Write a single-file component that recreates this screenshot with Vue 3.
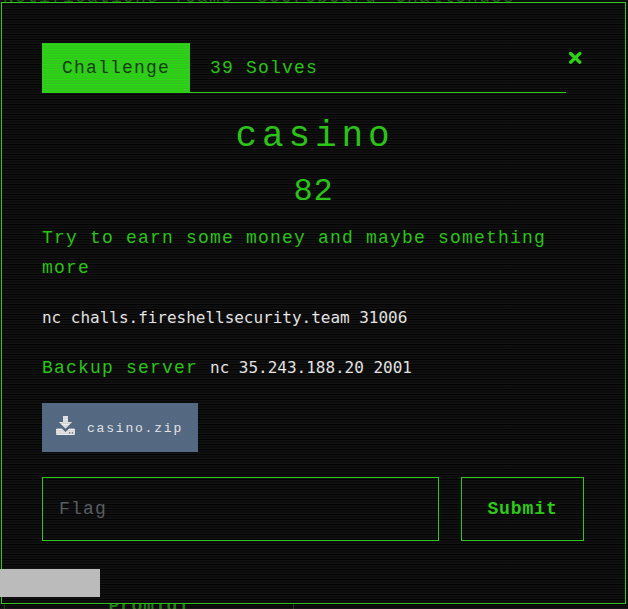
<script setup>
const navItems = ['Notifications', 'Teams', 'Scoreboard', 'Challenges']
</script>

<template>
  <div class="page">
    <nav class="nav">
      <span v-for="item in navItems" :key="item">{{ item }}</span>
    </nav>
    <section class="modal">
      <header class="head">
        <div class="tabs">
          <span class="tab active">Challenge</span>
          <span class="tab">39 Solves</span>
        </div>
        <button class="close" aria-label="Close">
          <svg width="14" height="14" viewBox="0 0 14 14"><path d="M2.600 2.500 11.800 11.200M11.800 2.500 2.600 11.200" /></svg>
        </button>
      </header>
      <h2 class="name">casino</h2>
      <h3 class="value">82</h3>
      <p class="desc">Try to earn some money and maybe something more</p>
      <p class="desc"><code>nc challs.fireshellsecurity.team 31006</code></p>
      <p class="desc">Backup server <code>nc 35.243.188.20 2001</code></p>
      <a class="file">
        <svg width="20" height="20" viewBox="0 0 20 20">
          <path d="M7 0h5v6h4.200L9.500 12.700 2.800 6H7z" />
          <path d="M1.200 12.500h4.600L9.500 16l3.700-3.500h4.600q1.200 0 1.200 1.200v4.100q0 1.200-1.200 1.200H1.200Q0 19 0 17.800v-4.100q0-1.200 1.200-1.200z" />
          <path class="dots" d="M13 16.300h1.300v1.300H13zM15.800 16.300h1.300v1.300h-1.300z" />
        </svg>
        <span>casino.zip</span>
      </a>
      <div class="form">
        <input class="flag" placeholder="Flag" />
        <button class="submit">Submit</button>
      </div>
    </section>
    <div class="card"><span>Promidi</span></div>
    <div class="scan"></div>
    <div class="status"></div>
  </div>
</template>

<style>
body {
  background: #010101;
  overflow: hidden;
}
</style>

<style scoped>
.page {
  position: relative;
  width: 628px;
  height: 609px;
  overflow: hidden;
  box-sizing: border-box;
  background: #010101;
  color: #25cf0f;
  font: 18px/30px "Liberation Mono", monospace;
  letter-spacing: 1.2px;
}
.page * {
  box-sizing: border-box;
}
.nav {
  display: flex;
  height: 2px;
  padding-left: 3px;
  gap: 14px;
  align-items: flex-end;
  line-height: 10px;
  overflow: hidden;
  color: #185c10;
}
.nav span:nth-child(3) {
  margin-left: 10px;
}
.nav span:nth-child(4) {
  margin-left: 4px;
}
.modal {
  width: 625px;
  height: 602px;
  margin-left: 1px;
  border: 1px solid #28d812;
  padding: 40px;
}
.head {
  display: flex;
  height: 50px;
}
.tabs {
  display: flex;
  width: 524px;
  border-bottom: 1px solid #28d812;
}
.tab {
  height: 50px;
  padding: 10px 20px;
}
.active {
  width: 148px;
  background: #28dc10;
  color: #083a04;
}
.close {
  display: flex;
  width: 19px;
  height: 30px;
  padding: 8px 0 0 2px;
  border: 0;
  background: none;
}
.close path {
  fill: none;
  stroke: #28e00c;
  stroke-width: 3.3;
  stroke-linecap: round;
}
.name,
.value {
  margin: 0;
  font-weight: 400;
  text-align: center;
}
.name {
  height: 62px;
  padding-left: 3px;
  font-size: 36px;
  line-height: 87px;
  letter-spacing: 4.9px;
}
.value {
  height: 68px;
  font-size: 32px;
  line-height: 74px;
  letter-spacing: 0.8px;
}
.desc {
  margin: 0 0 20px;
}
code {
  color: #f2f2f2;
  font: 16px/20px "DejaVu Sans Mono", monospace;
  letter-spacing: -0.02px;
}
.file {
  display: flex;
  align-items: center;
  width: 156px;
  height: 49px;
  padding: 2px 0 0 14px;
  gap: 11px;
  background: #526a86;
  color: #f4f4f4;
  font-size: 13px;
  letter-spacing: 1.8px;
}
.file svg {
  flex: none;
  margin-top: -5px;
  fill: #f0f0f0;
}
.file .dots {
  fill: #526a86;
}
.form {
  display: flex;
  gap: 22px;
  margin-top: 25px;
}
.flag,
.submit {
  height: 64px;
  border: 1px solid #28d812;
  background: none;
  font: inherit;
  letter-spacing: inherit;
  outline: 0;
}
.flag {
  width: 397px;
  padding: 0 16px;
  color: #28e00c;
}
.flag::placeholder {
  color: #565d62;
  opacity: 1;
}
.submit {
  width: 123px;
  padding: 0;
  color: #28d80e;
  font-weight: 700;
  letter-spacing: 0.9px;
}
.card {
  width: 290px;
  height: 5px;
  margin-left: 4px;
  border: 1px solid #123f0c;
  border-width: 0 1px;
  overflow: hidden;
  text-align: center;
  color: #1c7c10;
  font-weight: 700;
  line-height: 5px;
  letter-spacing: 0.8px;
}
.scan {
  position: absolute;
  inset: 0;
  pointer-events: none;
  background: repeating-linear-gradient(
    rgba(95, 95, 95, 0.17) 0 1px,
    rgba(95, 95, 95, 0.11) 1px 2px,
    rgba(95, 95, 95, 0.11) 2px 3px,
    rgba(95, 95, 95, 0.2) 3px 4px,
    rgba(95, 95, 95, 0.01) 4px 5px
  );
}
.status {
  position: absolute;
  left: 0;
  top: 569px;
  width: 100px;
  height: 28px;
  background: #bbb;
}
</style>
